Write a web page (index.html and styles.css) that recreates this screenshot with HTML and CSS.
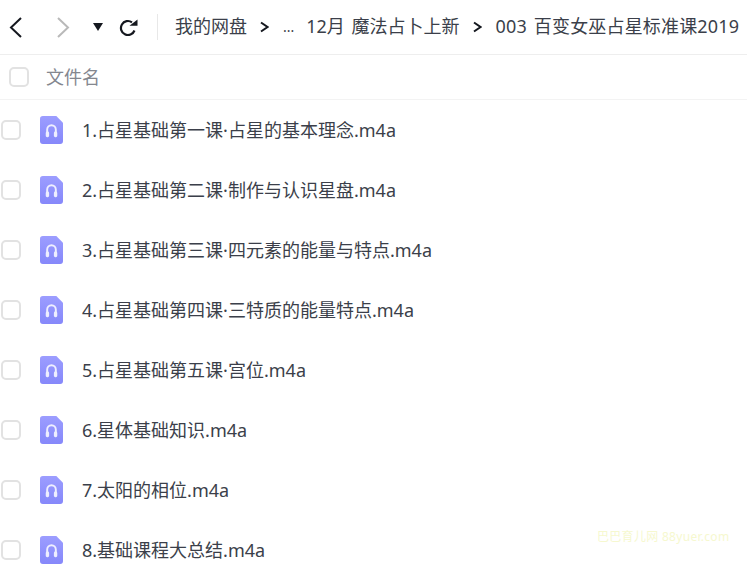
FILE: index.html
```html
<!DOCTYPE html>
<html lang="zh">
<head>
<meta charset="utf-8">
<title>文件列表</title>
<link rel="stylesheet" href="styles.css">
</head>
<body>
<header class="toolbar">
  <div class="nav">
    <svg class="ico back" viewBox="0 0 13 21"><path d="M12 1 2 10.500 12 20" /></svg>
    <svg class="ico forward" viewBox="0 0 13 21"><path d="M1 1l10 9.500L1 20" /></svg>
    <svg class="ico caret" viewBox="0 0 10 8"><path d="M0 0h10L5 8z" /></svg>
    <svg class="ico reload" viewBox="0 0 19 17"><path d="M15.500 11.500A7 7 0 1 1 13 3.300" /><path class="fill" d="M10.500 6.800h8V.5z" /></svg>
  </div>
  <nav class="crumbs">
    <span>我的网盘</span>
    <svg class="sep" viewBox="0 0 9 12"><path d="M1 1.500 7.500 6 1 10.500" /></svg>
    <span class="dots">...</span>
    <span>12月 魔法占卜上新</span>
    <svg class="sep" viewBox="0 0 9 12"><path d="M1 1.500 7.500 6 1 10.500" /></svg>
    <span class="current">003 百变女巫占星标准课2019</span>
  </nav>
</header>
<div class="colhead">
  <span class="check big"></span>
  <span>文件名</span>
</div>
<ul class="files">
  <li><span class="check"></span><svg class="audio" viewBox="0 0 24 29"><use href="#a"/></svg><span>1.占星基础第一课·占星的基本理念.m4a</span></li>
  <li><span class="check"></span><svg class="audio" viewBox="0 0 24 29"><use href="#a"/></svg><span>2.占星基础第二课·制作与认识星盘.m4a</span></li>
  <li><span class="check"></span><svg class="audio" viewBox="0 0 24 29"><use href="#a"/></svg><span>3.占星基础第三课·四元素的能量与特点.m4a</span></li>
  <li><span class="check"></span><svg class="audio" viewBox="0 0 24 29"><use href="#a"/></svg><span>4.占星基础第四课·三特质的能量特点.m4a</span></li>
  <li><span class="check"></span><svg class="audio" viewBox="0 0 24 29"><use href="#a"/></svg><span>5.占星基础第五课·宫位.m4a</span></li>
  <li><span class="check"></span><svg class="audio" viewBox="0 0 24 29"><use href="#a"/></svg><span>6.星体基础知识.m4a</span></li>
  <li><span class="check"></span><svg class="audio" viewBox="0 0 24 29"><use href="#a"/></svg><span>7.太阳的相位.m4a</span></li>
  <li><span class="check"></span><svg class="audio" viewBox="0 0 24 29"><use href="#a"/></svg><span>8.基础课程大总结.m4a</span></li>
</ul>
<div class="mark">巴巴育儿网 88yuer.com</div>
<svg class="defs" width="0" height="0">
  <defs>
    <linearGradient id="g" x1="0" y1="0" x2="0" y2="1"><stop offset="0" stop-color="#9c9dff"/><stop offset="1" stop-color="#8688fa"/></linearGradient>
    <g id="a">
      <path d="M3 0h14l7 7v19a3 3 0 0 1-3 3H3a3 3 0 0 1-3-3V3a3 3 0 0 1 3-3z" fill="url(#g)"/>
      <path d="M7.500 18v-4a4.500 4.500 0 0 1 9 0v4" fill="none" stroke="#eeeeff" stroke-width="2"/>
      <rect x="6" y="16" width="3.500" height="6" rx="1.500" fill="#eeeeff"/>
      <rect x="14.500" y="16" width="3.500" height="6" rx="1.500" fill="#eeeeff"/>
    </g>
  </defs>
</svg>
</body>
</html>
```
FILE: styles.css
```css
* { box-sizing: border-box; }
html, body { margin: 0; height: 566px; overflow: hidden; }
body {
  position: relative;
  background: #fff;
  color: #3b3f4a;
  font-family: "Noto Sans", "Noto Sans CJK SC", sans-serif;
}
.toolbar {
  display: flex;
  align-items: center;
  height: 55px;
  border-bottom: 1px solid #eeeeee;
}
.nav {
  display: flex;
  align-items: center;
  width: 158px;
  height: 26px;
  border-right: 1px solid #e8e8e8;
  flex: none;
}
.ico { display: block; flex: none; fill: none; }
.back { width: 13px; height: 21px; margin-left: 9px; stroke: #15181f; stroke-width: 2; }
.forward { width: 13px; height: 21px; margin-left: 35px; stroke: #b9b9b9; stroke-width: 2; }
.caret { width: 10px; height: 8px; margin-left: 23px; fill: #15181f; }
.reload { width: 19px; height: 17px; margin-left: 16px; stroke: #15181f; stroke-width: 2.200; }
.reload .fill { fill: #15181f; stroke: none; }
.crumbs {
  display: flex;
  align-items: center;
  margin-left: 17px;
  padding-bottom: 4px;
  font-size: 18px;
  word-spacing: 2px;
  white-space: nowrap;
}
.current { letter-spacing: .17px; }
.sep { width: 9px; height: 12px; margin: 4px 14px 0 13px; fill: none; stroke: #15181f; stroke-width: 2; flex: none; }
.dots { margin-right: 12px; font-size: 14px; margin-top: 3px; }
.colhead {
  display: flex;
  align-items: center;
  height: 45px;
  padding-left: 9px;
  gap: 17px;
  font-size: 18px;
  color: #84878f;
  border-bottom: 1px solid #f3f3f3;
}
.colhead span:last-child { margin-bottom: 2px; }
.check {
  display: block;
  width: 20px;
  height: 20px;
  border: 2px solid #e2e2e2;
  border-radius: 5px;
  flex: none;
}
.files { list-style: none; margin: 0; padding: 0; }
.files li {
  display: flex;
  align-items: center;
  height: 60px;
  padding-left: 1px;
  font-size: 18px;
  white-space: nowrap;
}
.files li span:last-child { margin-bottom: 2px; }
.audio { width: 23px; height: 28px; margin-left: 19px; margin-right: 19px; flex: none; }
.defs { position: absolute; }
.mark {
  position: absolute;
  left: 597px;
  top: 529px;
  font-size: 12px;
  line-height: 16px;
  letter-spacing: .3px;
  color: #f6f8cf;
  white-space: nowrap;
}
```
